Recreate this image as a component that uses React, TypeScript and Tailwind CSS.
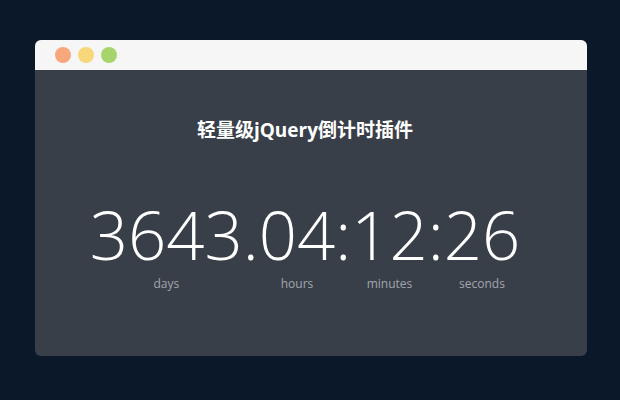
const units = [
    { value: "3643", label: "days", sep: "." },
    { value: "04", label: "hours", sep: ":" },
    { value: "12", label: "minutes", sep: ":" },
    { value: "26", label: "seconds", sep: "" },
];

const App = () => {
    return (
        <div className="w-[620px] h-[400px] bg-[#0b1829] pt-[40px] px-[35px] font-['Open_Sans','Noto_Sans_CJK_SC',sans-serif]">
            <div className="w-[552px] h-[316px] rounded-[6px] overflow-hidden flex flex-col bg-[#393f49]">
                <div className="h-[30px] bg-[#f6f6f6] flex items-center gap-[7px] pl-[20px]">
                    <span className="w-[16px] h-[16px] rounded-full bg-[#f8a77d]" />
                    <span className="w-[16px] h-[16px] rounded-full bg-[#f8d67a]" />
                    <span className="w-[16px] h-[16px] rounded-full bg-[#a6d66b]" />
                </div>
                <div className="flex flex-col items-center">
                    <h1 className="mt-[48px] text-[19px] font-bold text-white leading-[24px] -translate-x-[6px]">
                        轻量级jQuery倒计时插件
                    </h1>
                    <div className="mt-[56px] flex items-start text-white -translate-x-[6px]">
                        {units.map((u) => (
                            <div key={u.label} className="flex items-start">
                                <div className="flex flex-col items-center">
                                    <span className="text-[67px] font-light leading-[72px]">{u.value}</span>
                                    <span className="mt-[6px] text-[12px] text-[#a1a6ad] leading-[16px]">{u.label}</span>
                                </div>
                                {u.sep && <span className="text-[67px] font-light leading-[72px]">{u.sep}</span>}
                            </div>
                        ))}
                    </div>
                </div>
            </div>
        </div>
    );
};

export default App;
